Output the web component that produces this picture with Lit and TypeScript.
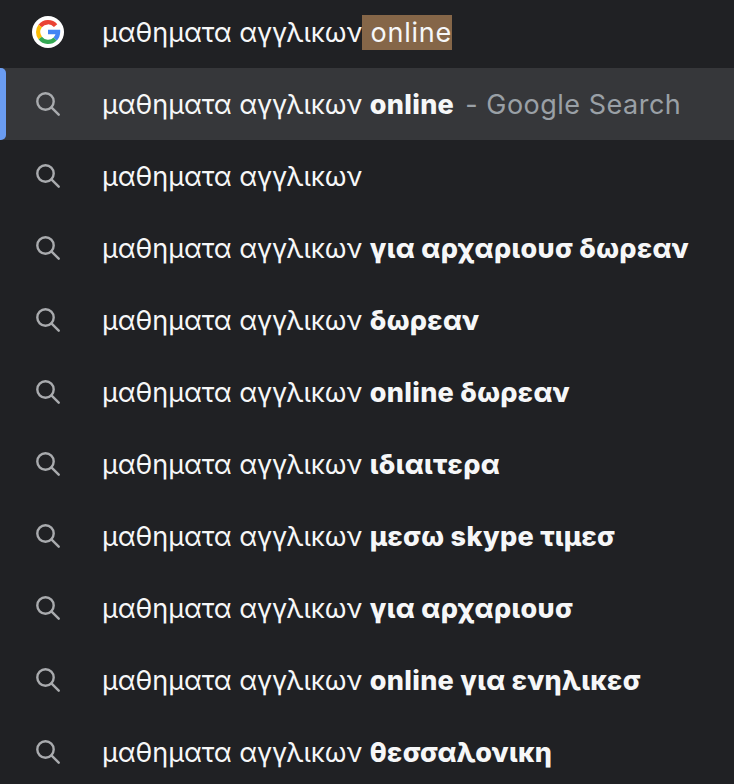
import { LitElement, html, css } from "lit";
import { customElement } from "lit/decorators.js";

const BASE = "μαθηματα αγγλικων";
const rows: string[] = [
  "",
  "για αρχαριουσ δωρεαν",
  "δωρεαν",
  "online δωρεαν",
  "ιδιαιτερα",
  "μεσω skype τιμεσ",
  "για αρχαριουσ",
  "online για ενηλικεσ",
  "θεσσαλονικη",
];

const search = html`<svg class="icon" viewBox="0 0 24 24" width="24" height="24" fill="none" stroke="#a9abae" stroke-width="2.4">
  <circle cx="9.5" cy="9.5" r="8.2"></circle>
  <path d="M15.4 15.4 L22.7 22.7" stroke-linecap="round"></path>
</svg>`;

@customElement("app-root")
export class AppRoot extends LitElement {
  static styles = css`
    :host {
      display: block;
      width: 734px;
      height: 784px;
      overflow: hidden;
      background: #202124;
      color: #f6f7f8;
      font-family: Inter, "Liberation Sans", sans-serif;
      font-size: 27px;
      letter-spacing: -0.08px;
    }
    .row {
      display: flex;
      align-items: center;
      height: 72px;
      white-space: pre;
      position: relative;
    }
    .row.first { height: 68px; padding-bottom: 4px; box-sizing: border-box; }
    .row.sel { background: #36373a; }
    .bar {
      position: absolute;
      left: 0;
      top: 0;
      bottom: 0;
      width: 6px;
      background: #6a9cf1;
      border-radius: 0 5px 5px 0;
    }
    .slot {
      width: 102px;
      flex: none;
      display: flex;
      padding-left: 36px;
      box-sizing: border-box;
    }
    .first .slot { padding-left: 32px; }
    .icon { display: block; }
    b { font-weight: 800; letter-spacing: 0.3px; }
    .hl { background: #856648; display: inline-block; line-height: 35px; letter-spacing: 0.75px; }
    .dim { color: #9aa0a6; letter-spacing: 0.5px; margin-left: 3px; }
  `;

  render() {
    return html`
      <div class="row first">
        <div class="slot">
          <svg viewBox="0 0 32 32" width="32" height="32">
            <circle cx="16" cy="16" r="16" fill="#fff"></circle>
            <g fill="none" stroke-width="4.4">
              <path d="M23.6 9.6 A10 10 0 0 0 8.2 10" stroke="#ea4335"></path>
              <path d="M8.2 10 A10 10 0 0 0 8.2 22" stroke="#fbbc05"></path>
              <path d="M8.2 22 A10 10 0 0 0 23.2 23" stroke="#34a853"></path>
              <path d="M23.2 23 A10 10 0 0 0 26 16 H16" stroke="#4285f4"></path>
            </g>
          </svg>
        </div>
        <span>${BASE}<span class="hl"> online</span></span>
      </div>
      <div class="row sel">
        <div class="bar"></div>
        <div class="slot">${search}</div>
        <span>${BASE} <b>online</b></span><span class="dim"> - Google Search</span>
      </div>
      ${rows.map(
        (r) => html`<div class="row">
          <div class="slot">${search}</div>
          <span>${BASE}${r ? html` <b>${r}</b>` : ""}</span>
        </div>`
      )}
    `;
  }
}
